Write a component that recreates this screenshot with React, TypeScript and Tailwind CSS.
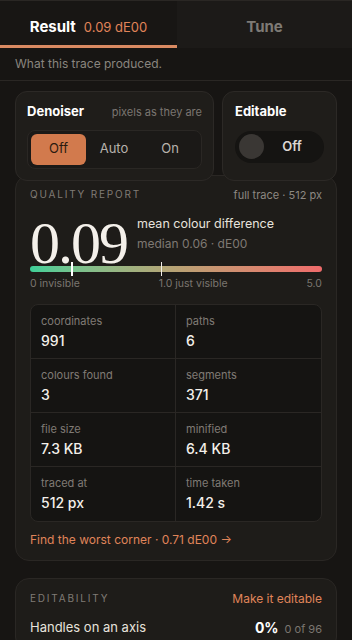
import React from "react";

const stats = [
  { label: "coordinates", value: "991" },
  { label: "paths", value: "6" },
  { label: "colours found", value: "3" },
  { label: "segments", value: "371" },
  { label: "file size", value: "7.3 KB" },
  { label: "minified", value: "6.4 KB" },
  { label: "traced at", value: "512 px" },
  { label: "time taken", value: "1.42 s" },
];

export default function App() {
  return (
    <div
      className="w-[352px] h-[640px] overflow-hidden bg-[#171513] text-[#eeeae4]"
      style={{ fontFamily: "Inter, 'Noto Sans', sans-serif" }}
    >
      {/* tabs */}
      <div className="flex h-[48px] border-t border-[#2a2724]">
        <div className="relative flex w-[177px] items-center justify-center gap-2 bg-[#181614] pt-[6px]">
          <span className="text-[15px] font-bold text-white">Result</span>
          <span className="text-[13px] text-[#e08459]">0.09 dE00</span>
          <div className="absolute bottom-0 left-0 right-0 h-[3px] bg-[#d98a62]" />
        </div>
        <div className="flex flex-1 items-center justify-center bg-[#1c1a18] pt-[6px]">
          <span className="text-[15px] font-bold text-[#7e7a75]">Tune</span>
        </div>
      </div>
      <div className="flex h-[33px] items-center border-b border-[#2a2724] px-[15px] text-[12px] text-[#8a857f]">
        What this trace produced.
      </div>

      <div className="px-[15px] pt-[10px]">
        <div className="relative z-10 flex gap-2">
          <div className="w-[199px] rounded-[12px] border border-[#2c2926] bg-[#1f1d1a] px-[11px] pt-[10px] pb-[11px]">
            <div className="flex items-center justify-between">
              <span className="text-[13px] font-bold text-white">Denoiser</span>
              <span className="text-[11px] text-[#7b7671]">pixels as they are</span>
            </div>
            <div className="mt-[8px] flex h-[39px] items-center rounded-[8px] border border-[#2a2724] bg-[#1b1917] p-[3px]">
              <div className="flex h-[31px] w-[55px] items-center justify-center rounded-[6px] bg-[#d27a4d] text-[13px] text-[#2a1a10]">
                Off
              </div>
              <div className="flex flex-1 items-center justify-center text-[13px] text-[#b8b3ad]">Auto</div>
              <div className="flex flex-1 items-center justify-center text-[13px] text-[#b8b3ad]">On</div>
            </div>
          </div>
          <div className="flex-1 rounded-[12px] border border-[#2c2926] bg-[#1f1d1a] px-[12px] pt-[10px]">
            <div className="text-[13px] font-bold text-white">Editable</div>
            <div className="mt-[9px] flex h-[32px] w-[89px] items-center rounded-full bg-[#151412] px-[4px]">
              <div className="h-[25px] w-[25px] rounded-full bg-[#3a3734]" />
              <span className="flex-1 text-center text-[13px] font-semibold text-[#dcd8d2]">Off</span>
            </div>
          </div>
        </div>

        {/* quality report */}
        <div className="-mt-[6px] rounded-[14px] border border-[#2a2724] bg-[#1e1c19] px-[14px] pt-[11px] pb-[11px]">
          <div className="flex items-center justify-between">
            <span className="text-[10px] tracking-[0.18em] text-[#807b75]">QUALITY REPORT</span>
            <span className="text-[11px] text-[#8d8882]">full trace · 512 px</span>
          </div>
          <div className="mt-[12px] flex items-start gap-[10px]">
            <span
              className="mt-[5px] text-[60px] leading-[46px] tracking-[-2px] text-[#f4f0ea]"
              style={{ fontFamily: "'Liberation Serif', 'DejaVu Serif', serif" }}
            >
              0.09
            </span>
            <div>
              <div className="text-[12.5px] text-[#e6e2dc]">mean colour difference</div>
              <div className="mt-[1px] text-[12px] text-[#7e7973]">median 0.06 · dE00</div>
            </div>
          </div>
          <div className="relative h-[6px] rounded-full bg-gradient-to-r from-[#3ccf98] via-[#b8a274] to-[#ef6b6b]">
            <div className="absolute left-[14%] top-[-4px] h-[14px] w-[2px] bg-white" />
            <div className="absolute left-[45%] top-[-4px] h-[14px] w-px bg-[#f2eee8]" />
          </div>
          <div className="mt-[4px] flex justify-between text-[10.5px] text-[#7b7670]">
            <span>0 invisible</span>
            <span>1.0 just visible</span>
            <span>5.0</span>
          </div>

          <div className="mt-[12px] grid grid-cols-2 overflow-hidden rounded-[8px] border border-[#2a2724] bg-[#151412]">
            {stats.map((s, i) => (
              <div
                key={s.label}
                className={
                  "h-[54px] px-[10px] pt-[8px] " +
                  (i % 2 === 0 ? "border-r border-[#2a2724] " : "") +
                  (i < 6 ? "border-b border-[#2a2724]" : "")
                }
              >
                <div className="text-[11px] text-[#807b75]">{s.label}</div>
                <div className="mt-[1px] text-[14px] font-medium text-[#f4f0ea]">{s.value}</div>
              </div>
            ))}
          </div>
          <div className="mt-[9px] text-[12px] text-[#e0855a]">Find the worst corner · 0.71 dE00 →</div>
        </div>

        {/* editability */}
        <div className="mt-[17px] rounded-[14px] border border-[#2a2724] bg-[#1e1c19] px-[14px] pt-[11px] pb-[12px]">
          <div className="flex items-center justify-between">
            <span className="text-[10px] tracking-[0.18em] text-[#807b75]">EDITABILITY</span>
            <span className="text-[12px] text-[#e0855a]">Make it editable</span>
          </div>
          <div className="mt-[9px] flex items-center justify-between">
            <span className="text-[13px] text-[#e6e2dc]">Handles on an axis</span>
            <span className="flex items-baseline gap-[6px]">
              <span className="text-[14px] font-bold text-white">0%</span>
              <span className="text-[11px] text-[#7b7670]">0 of 96</span>
            </span>
          </div>
        </div>
      </div>
    </div>
  );
}
